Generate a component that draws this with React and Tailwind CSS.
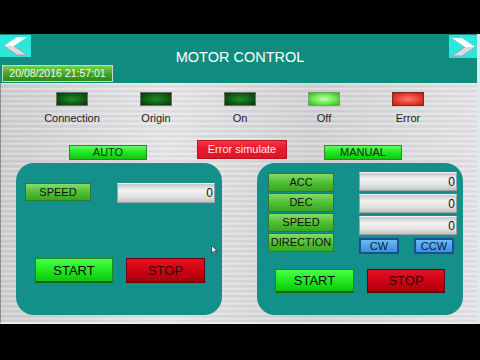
import React from "react";

function Arrow({ dir, className }) {
  const left = dir === "left";
  return (
    <div className={`bg-[#2ee6de] flex items-center justify-center ${className}`}>
      <svg width="28" height="20" viewBox="0 0 28 20" style={left ? {} : { transform: "scaleX(-1)" }}>
        <polygon points="2,10 15,1 25,1 12,10" fill="#ffffff" />
        <polygon points="2,10 12,10 25,19 15,19" fill="#d9dddd" />
        <polyline points="12,10 25,19 15,19 2,10" fill="none" stroke="#9aa6a6" strokeWidth="1" />
      </svg>
    </div>
  );
}

function Led({ kind }) {
  const cls =
    kind === "on"
      ? "bg-[radial-gradient(ellipse_at_center,#c0ffaa,#66e84e_55%,#3ca832)] border-[#7aa070]"
      : kind === "err"
      ? "bg-[radial-gradient(ellipse_at_center,#ff7a6a,#e63a2e_60%,#b4201a)] border-[#7a2a22]"
      : "bg-[radial-gradient(ellipse_at_center,#1f8c26,#0f5a14_60%,#0a2c0c)] border-[#6e6e6e]";
  return <div className={`w-[32px] h-[14px] border ${cls}`} />;
}

const labelBtn =
  "w-[66px] flex items-center justify-center bg-[linear-gradient(180deg,#86dc68,#52c036_50%,#3aa424)] border border-[#2c7a2c] text-[11px] leading-none text-[#111]";
const inputBox =
  "w-[98px] flex items-center justify-end pr-[1px] bg-[linear-gradient(180deg,#c6c6c6,#f2f2f2_35%,#e2e2e2_70%,#c4c4c4)] border border-[#9aa4a4] border-t-[#f4f4f4] text-[12px] leading-none text-[#111]";
const startBtn =
  "flex items-center justify-center bg-[linear-gradient(180deg,#48ff48,#1ee81e_55%,#12c412)] border border-[#1a8a1a] border-b-2 border-b-[#0e6a0e] text-[13px] leading-none text-[#0a0a0a]";
const stopBtn =
  "flex items-center justify-center bg-[linear-gradient(180deg,#e41222,#cc0212_55%,#a80010)] border border-[#6a0008] border-b-2 text-[13px] leading-none text-[#3a0404]";
const dirBtn =
  "w-[40px] h-[16px] flex items-center justify-center bg-[linear-gradient(180deg,#6cbaf8,#3a8fe6)] border-2 border-[#1e4f8a] text-[11px] leading-none text-[#0a1a3a]";
const modeBtn =
  "w-[78px] h-[15px] flex items-center justify-center bg-[linear-gradient(180deg,#5cff5c,#22e422_50%,#12c412)] border border-[#2a8a2a] text-[11px] leading-none text-[#1a2a1a]";

export default function App() {
  return (
    <div className="w-[480px] h-[360px] bg-black flex flex-col font-['Liberation_Sans',Arial,sans-serif]">
      <div className="h-[34px] shrink-0" />
      <div className="h-[290px] shrink-0 flex">
        <div className="w-[477px] flex flex-col">
          <header className="h-[49px] shrink-0 bg-[#0f8c7f] flex flex-col pt-[1px]">
            <div className="flex items-start h-[30px]">
              <Arrow dir="left" className="w-[31px] h-[22px]" />
              <div className="flex-1 text-center pt-[15px] text-[14.5px] leading-[15px] text-white">
                MOTOR CONTROL
              </div>
              <Arrow dir="right" className="w-[28px] h-[23px]" />
            </div>
            <div className="ml-[2px] w-[111px] h-[17px] flex items-center justify-center bg-[linear-gradient(180deg,#7ccc52,#3e9e22_60%,#2e8a18)] border border-[#c8d6c8] text-[10.5px] leading-none text-[#eaffea]">
              20/08/2016 21:57:01
            </div>
          </header>
          <main className="h-[241px] shrink-0 flex flex-col border-l border-l-[#8c8c8c] border-b-2 border-b-[#e6eef0] bg-[repeating-linear-gradient(180deg,rgba(255,255,255,0.35)_0px,rgba(255,255,255,0)_2px,rgba(0,0,0,0.05)_3px,rgba(255,255,255,0)_5px),linear-gradient(90deg,#cfcfd1,#e6e6e8_35%,#d2d2d4_65%,#e4e4e6)]">
            <div className="pt-[9px] pl-[29px] grid grid-cols-[repeat(5,84px)]">
              {[
                ["Connection", "dark"],
                ["Origin", "dark"],
                ["On", "dark"],
                ["Off", "on"],
                ["Error", "err"],
              ].map(([label, kind]) => (
                <div key={label} className="flex flex-col items-center">
                  <Led kind={kind} />
                  <div className="mt-[6px] text-[11px] leading-[13px] text-[#1e1e1e]">{label}</div>
                </div>
              ))}
            </div>
            <div className="mt-[15px] pl-[68px] flex items-end">
              <div className={modeBtn}>AUTO</div>
              <div className="ml-[50px] mb-[1px] w-[90px] h-[19px] flex items-center justify-center bg-[linear-gradient(180deg,#f03a4a,#ea1a2c_40%,#e01426)] border border-[#c01020] text-[11px] leading-none text-[#ffe8ea]">
                Error simulate
              </div>
              <div className={`ml-[37px] ${modeBtn}`}>MANUAL</div>
            </div>
            <div className="mt-[3px] pl-[15px] flex gap-[35px]">
              <div className="relative w-[206px] h-[152px] rounded-[18px] bg-[#13908a] flex flex-col">
                <div className="mt-[20px] ml-[9px] flex items-start">
                  <div className={`${labelBtn} h-[18px]`}>SPEED</div>
                  <div className={`${inputBox} ml-[26px] h-[20px]`}>0</div>
                </div>
                <div className="mt-[55px] ml-[19px] flex gap-[13px]">
                  <div className={`${startBtn} w-[78px] h-[25px]`}>START</div>
                  <div className={`${stopBtn} w-[79px] h-[25px]`}>STOP</div>
                </div>
                <svg className="absolute left-[195px] top-[82px]" width="7" height="10" viewBox="0 0 7 10">
                  <polygon points="0.5,0.5 0.5,8 2.5,6.2 4,9.3 5.2,8.8 3.8,5.8 6.3,5.8" fill="#ffffff" stroke="#1a3a4a" strokeWidth="0.8" />
                </svg>
              </div>
              <div className="w-[206px] h-[152px] rounded-[18px] bg-[#13908a] flex flex-col">
                <div className="flex items-start">
                  <div className="ml-[11px] mt-[10px] flex flex-col gap-[1px]">
                    {["ACC", "DEC", "SPEED", "DIRECTION"].map((t) => (
                      <div key={t} className={`${labelBtn} h-[19px] ${t === "DIRECTION" ? "text-[10.5px]" : ""}`}>
                        {t}
                      </div>
                    ))}
                  </div>
                  <div className="ml-[25px] mt-[9px] flex flex-col">
                    <div className="flex flex-col gap-[3px]">
                      <div className={`${inputBox} h-[19px]`}>0</div>
                      <div className={`${inputBox} h-[19px]`}>0</div>
                      <div className={`${inputBox} h-[19px]`}>0</div>
                    </div>
                    <div className="mt-[3px] flex gap-[15px]">
                      <div className={dirBtn}>CW</div>
                      <div className={dirBtn}>CCW</div>
                    </div>
                  </div>
                </div>
                <div className="mt-[15px] ml-[18px] flex gap-[13px]">
                  <div className={`${startBtn} w-[79px] h-[24px]`}>START</div>
                  <div className={`${stopBtn} w-[78px] h-[24px]`}>STOP</div>
                </div>
              </div>
            </div>
          </main>
        </div>
        <div className="w-[3px] bg-[#dde9ee]" />
      </div>
    </div>
  );
}
